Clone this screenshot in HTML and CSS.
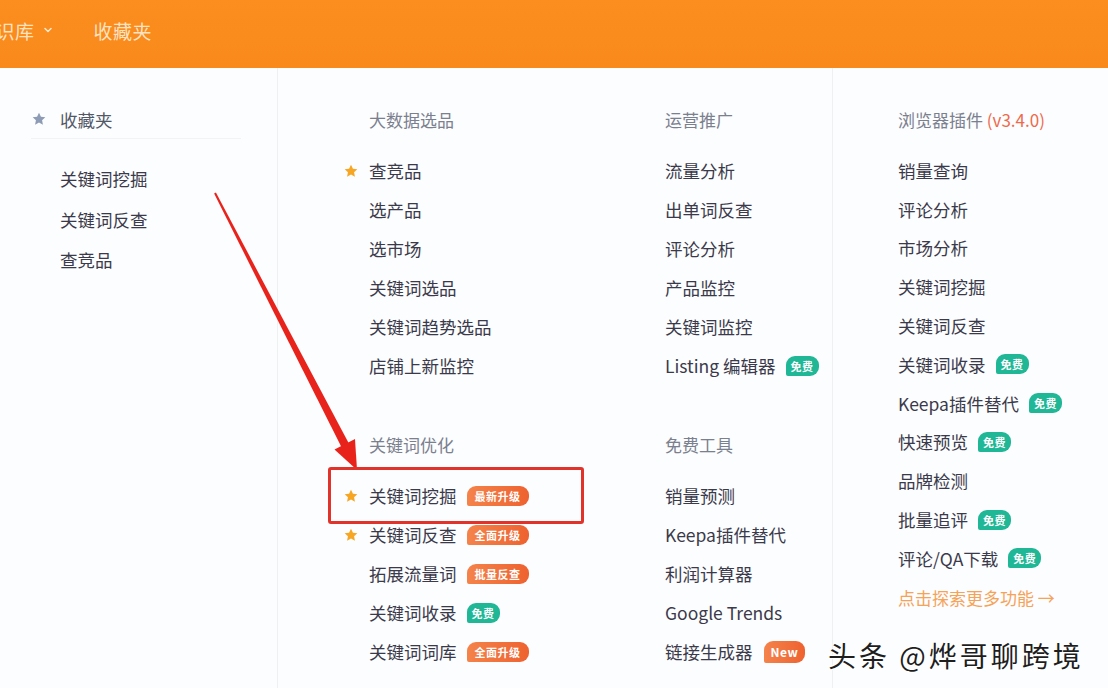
FILE: index.html
```html
<!DOCTYPE html>
<html lang="zh-CN">
<head>
<meta charset="utf-8">
<title>菜单</title>
<link rel="stylesheet" href="styles.css">
</head>
<body>
<header class="topbar">
  <nav class="nav">
    <span class="nav-item nav-cut">知识库
      <svg class="chev" width="10" height="8" viewBox="0 0 10 8"><path d="M2 2.5 L5 5.5 L8 2.5" fill="none" stroke="currentColor" stroke-width="1.6" stroke-linecap="round" stroke-linejoin="round"/></svg>
    </span>
    <span class="nav-item">收藏夹</span>
  </nav>
</header>

<main class="menu">
  <aside class="fav">
    <div class="fav-title">
      <svg class="star" width="16" height="16" viewBox="0 0 24 24"><path d="M12 2.5l2.9 6.1 6.6.8-4.9 4.6 1.3 6.6L12 17.3l-5.9 3.3 1.3-6.6-4.9-4.6 6.6-.8z" fill="#8d9bb5"/></svg>
      <span>收藏夹</span>
    </div>
    <ul class="fav-list">
      <li>关键词挖掘</li>
      <li>关键词反查</li>
      <li>查竞品</li>
    </ul>
  </aside>

  <section class="tools">
    <div class="col">
      <div class="group">
        <h3 class="head">大数据选品</h3>
        <ul class="list">
          <li><span class="mark"><svg width="16" height="16" viewBox="0 0 24 24"><path d="M12 2.5l2.9 6.1 6.6.8-4.9 4.6 1.3 6.6L12 17.3l-5.9 3.3 1.3-6.6-4.9-4.6 6.6-.8z" fill="#f6a623"/></svg></span>查竞品</li>
          <li>选产品</li>
          <li>选市场</li>
          <li>关键词选品</li>
          <li>关键词趋势选品</li>
          <li>店铺上新监控</li>
        </ul>
      </div>
      <div class="group">
        <h3 class="head">关键词优化</h3>
        <ul class="list">
          <li><span class="mark"><svg width="16" height="16" viewBox="0 0 24 24"><path d="M12 2.5l2.9 6.1 6.6.8-4.9 4.6 1.3 6.6L12 17.3l-5.9 3.3 1.3-6.6-4.9-4.6 6.6-.8z" fill="#f6a623"/></svg></span>关键词挖掘<span class="badge orange">最新升级</span></li>
          <li><span class="mark"><svg width="16" height="16" viewBox="0 0 24 24"><path d="M12 2.5l2.9 6.1 6.6.8-4.9 4.6 1.3 6.6L12 17.3l-5.9 3.3 1.3-6.6-4.9-4.6 6.6-.8z" fill="#f6a623"/></svg></span>关键词反查<span class="badge orange">全面升级</span></li>
          <li>拓展流量词<span class="badge orange">批量反查</span></li>
          <li>关键词收录<span class="badge teal">免费</span></li>
          <li>关键词词库<span class="badge orange">全面升级</span></li>
        </ul>
      </div>
    </div>
    <div class="col">
      <div class="group">
        <h3 class="head">运营推广</h3>
        <ul class="list">
          <li>流量分析</li>
          <li>出单词反查</li>
          <li>评论分析</li>
          <li>产品监控</li>
          <li>关键词监控</li>
          <li>Listing 编辑器<span class="badge teal">免费</span></li>
        </ul>
      </div>
      <div class="group">
        <h3 class="head">免费工具</h3>
        <ul class="list">
          <li>销量预测</li>
          <li>Keepa插件替代</li>
          <li>利润计算器</li>
          <li>Google Trends</li>
          <li>链接生成器<span class="badge orange new">New</span></li>
        </ul>
      </div>
    </div>
  </section>

  <section class="plugin">
    <h3 class="head">浏览器插件 <span class="ver">(v3.4.0)</span></h3>
    <ul class="list tight">
      <li>销量查询</li>
      <li>评论分析</li>
      <li>市场分析</li>
      <li>关键词挖掘</li>
      <li>关键词反查</li>
      <li>关键词收录<span class="badge teal">免费</span></li>
      <li>Keepa插件替代<span class="badge teal">免费</span></li>
      <li>快速预览<span class="badge teal">免费</span></li>
      <li>品牌检测</li>
      <li>批量追评<span class="badge teal">免费</span></li>
      <li>评论/QA下载<span class="badge teal">免费</span></li>
      <li class="more">点击探索更多功能 →</li>
    </ul>
  </section>
</main>

<svg class="arrow" width="1108" height="688" viewBox="0 0 1108 688">
  <polygon points="215.9,192.5 348.6,442.9 341.4,446.9 214.1,193.5" fill="#e8231b"/>
  <polygon points="357,470 355,439 334.5,449.5" fill="#e8231b"/>
</svg>
<div class="callout"></div>
<div class="watermark">头条 @烨哥聊跨境</div>
</body>
</html>
```

FILE: styles.css
```css
* { box-sizing: border-box; }
html, body { margin: 0; padding: 0; }
body {
  width: 1108px;
  height: 688px;
  overflow: hidden;
  position: relative;
  background: #fbfcfe;
  font-family: "Noto Sans CJK SC", "Noto Sans", sans-serif;
  color: #3b3a4a;
}

.topbar {
  height: 68px;
  background: linear-gradient(180deg, #fb8e1f 0%, #f9891b 100%);
  display: flex;
  align-items: center;
  overflow: hidden;
}
.nav {
  display: flex;
  align-items: center;
  gap: 41px;
  margin-left: -24px;
  margin-top: -8px;
}
.nav-item {
  font-size: 19px;
  color: rgba(255, 240, 220, 0.88);
  display: flex;
  align-items: center;
  gap: 8px;
  letter-spacing: 0.5px;
}
.chev { color: rgba(255, 240, 220, 0.9); }

.menu {
  display: grid;
  grid-template-columns: 278px 555px 1fr;
  height: 620px;
  background: #fcfdff;
}

.fav {
  border-right: 1px solid #eef0f4;
  padding-top: 32px;
}
.fav-title {
  display: flex;
  align-items: center;
  gap: 13px;
  height: 39px;
  margin-left: 31px;
  width: 210px;
  font-size: 17.5px;
  color: #525866;
  border-bottom: 1px solid #f1f3f6;
}
.fav-list {
  list-style: none;
  margin: 20px 0 0 0;
  padding: 0 0 0 60px;
}
.fav-list li {
  height: 40.5px;
  line-height: 40.5px;
  font-size: 17.5px;
}

.tools {
  display: grid;
  grid-template-columns: 296px 1fr;
  padding-left: 91px;
  padding-top: 32px;
  border-right: 1px solid #eef0f4;
}
.group + .group { margin-top: 40px; }

.head {
  margin: 0 0 12px 0;
  height: 39px;
  line-height: 39px;
  font-size: 17px;
  font-weight: normal;
  color: #7b808e;
}
.ver { color: #ee6a4c; }

.list {
  list-style: none;
  margin: 0;
  padding: 0;
}
.list li {
  display: flex;
  align-items: center;
  height: 39px;
  font-size: 17.5px;
  white-space: nowrap;
}
.list.tight li { height: 38.8px; }

.mark {
  width: 26px;
  margin-left: -26px;
  display: flex;
  align-items: center;
}

.badge {
  display: inline-flex;
  align-items: center;
  justify-content: center;
  height: 20px;
  margin-left: 10px;
  padding: 0 8px;
  font-size: 11px;
  font-weight: bold;
  color: #fff;
  border-radius: 9px 9px 9px 2px;
  letter-spacing: 0.5px;
}
.badge.orange { background: linear-gradient(90deg, #f4834a, #ee6230); }
.badge.teal { background: #1fb795; padding: 0 5px; }
.badge.new { height: 22px; padding: 0 7px; font-size: 12px; margin-left: 11px; }

.plugin {
  padding-left: 65px;
  padding-top: 32px;
}
.more { color: #f6a257; font-size: 17px !important; }

.arrow {
  position: absolute;
  left: 0;
  top: 0;
  pointer-events: none;
}
.callout {
  position: absolute;
  left: 328px;
  top: 467px;
  width: 256px;
  height: 57px;
  border: 3px solid #e2332b;
  border-radius: 3px;
  pointer-events: none;
}
.watermark {
  position: absolute;
  left: 828px;
  top: 636px;
  font-size: 28px;
  line-height: 38px;
  letter-spacing: 3px;
  color: #1e1e1e;
  text-shadow: 1px 1px 0 #fff, -1px -1px 0 #fff, 1px -1px 0 #fff, -1px 1px 0 #fff;
  white-space: nowrap;
}
```
